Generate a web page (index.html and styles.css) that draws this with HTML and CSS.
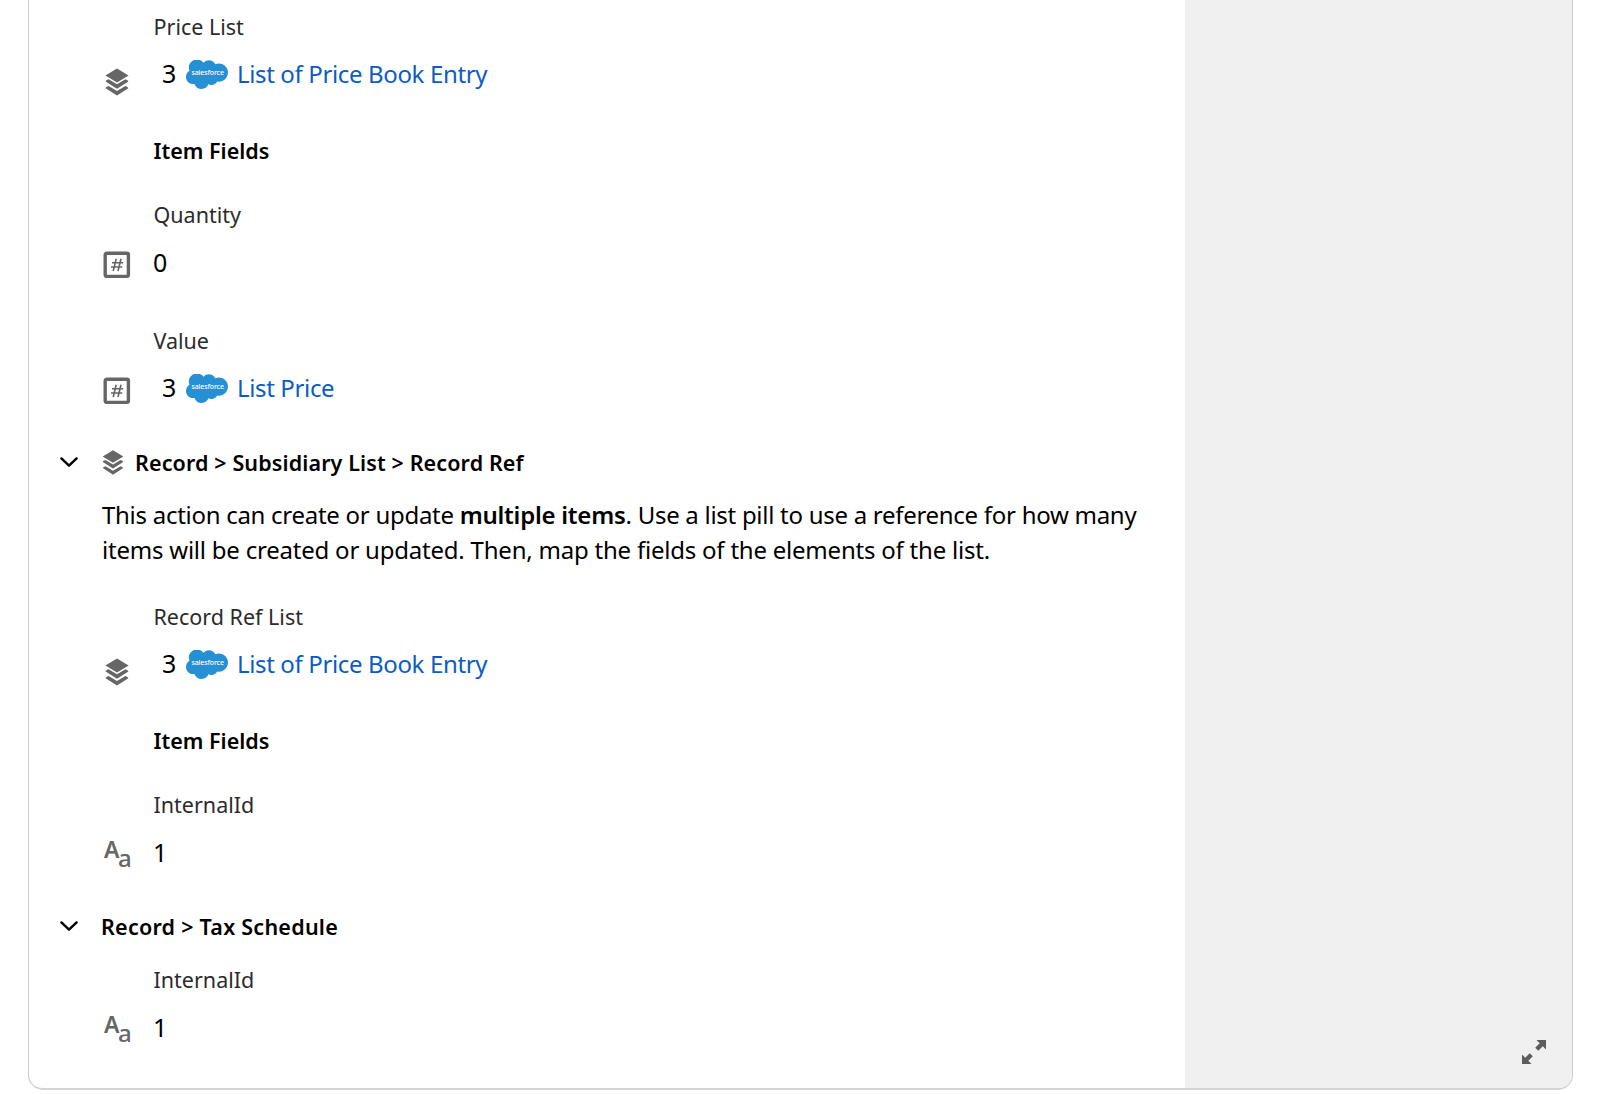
FILE: index.html
```
<!DOCTYPE html>
<html lang="en">
<head>
<meta charset="UTF-8">
<meta name="viewport" content="width=device-width, initial-scale=1.0">
<title>Record mapping</title>
<link rel="stylesheet" href="styles.css">
</head>
<body>
  <svg class="sprite" width="0" height="0">
    <symbol id="icon-list" viewBox="0 0 24 28">
      <path d="M12 0.4 23.6 7.4 12 14.4 0.4 7.4Z"/>
      <path d="M0.6 13.4Q0.3 12.500 3.600 11.300L12 16.300 20.400 11.300Q23.700 12.500 23.400 13.400L12 20.800Z"/>
      <path d="M0.6 20.2Q0.3 19.300 3.600 18.100L12 23.100 20.400 18.100Q23.700 19.300 23.400 20.200L12 27.600Z"/>
    </symbol>
    <symbol id="icon-number" viewBox="0 0 28 28">
      <rect x="2.2" y="2.2" width="23.2" height="23.2" rx="1.6" fill="none" stroke="currentColor" stroke-width="3.4"/>
      <path d="M13.2 7.800 10.200 20M18 7.800 15 20M9 11.800H20.200M8 16H19.200" fill="none" stroke="currentColor" stroke-width="1.6"/>
    </symbol>
    <symbol id="icon-chevron" viewBox="0 0 18 10">
      <path d="M1.4 1.4 9 8.700 16.600 1.400" fill="none" stroke="#000" stroke-width="2.4" stroke-linecap="round" stroke-linejoin="round"/>
    </symbol>
    <symbol id="logo-salesforce" viewBox="0 0 42 29">
      <path fill="#2590d3" transform="scale(1.75 1.75) translate(0 -3.9)" d="M10.006 5.415a4.195 4.195 0 013.045-1.306c1.56 0 2.954.9 3.69 2.205.63-.3 1.35-.45 2.1-.45 2.85 0 5.159 2.34 5.159 5.22s-2.31 5.22-5.176 5.22c-.345 0-.69-.044-1.02-.104a3.75 3.75 0 01-3.3 1.95c-.6 0-1.155-.15-1.65-.375A4.314 4.314 0 018.88 20.4a4.302 4.302 0 01-4.05-2.82c-.27.062-.54.076-.825.076-2.204 0-4.005-1.8-4.005-4.05 0-1.5.811-2.805 2.01-3.51-.255-.57-.39-1.2-.39-1.846 0-2.58 2.1-4.65 4.65-4.65 1.53 0 2.85.705 3.72 1.8"/>
    </symbol>
  </svg>

  <div class="card">
    <main class="mapping">
      <div class="field">
        <div class="label">Price List</div>
        <div class="row">
          <svg class="icon icon-list"><use href="#icon-list"/></svg>
          <span class="pill"><span class="step">3</span><span class="logo"><svg><use href="#logo-salesforce"/></svg><span>salesforce</span></span><a class="link" href="#">List of Price Book Entry</a></span>
        </div>
      </div>
      <h3 class="subhead">Item Fields</h3>
      <div class="field">
        <div class="label">Quantity</div>
        <div class="row">
          <svg class="icon"><use href="#icon-number"/></svg>
          <span class="constant">0</span>
        </div>
      </div>
      <div class="field next">
        <div class="label">Value</div>
        <div class="row">
          <svg class="icon"><use href="#icon-number"/></svg>
          <span class="pill"><span class="step">3</span><span class="logo"><svg><use href="#logo-salesforce"/></svg><span>salesforce</span></span><a class="link" href="#">List Price</a></span>
        </div>
      </div>

      <h2 class="group-title">
        <svg class="chevron"><use href="#icon-chevron"/></svg>
        <svg class="group-icon"><use href="#icon-list"/></svg>
        <span class="path-list">Record &gt; Subsidiary List &gt; Record Ref</span>
      </h2>
      <p class="help"><span class="line-1">This action can create or update <b>multiple items</b>. Use a list pill to use a reference for how many</span><br><span class="line-2">items will be created or updated. Then, map the fields of the elements of the list.</span></p>
      <div class="field ref-list">
        <div class="label">Record Ref List</div>
        <div class="row">
          <svg class="icon icon-list"><use href="#icon-list"/></svg>
          <span class="pill"><span class="step">3</span><span class="logo"><svg><use href="#logo-salesforce"/></svg><span>salesforce</span></span><a class="link" href="#">List of Price Book Entry</a></span>
        </div>
      </div>
      <h3 class="subhead">Item Fields</h3>
      <div class="field">
        <div class="label">InternalId</div>
        <div class="row">
          <span class="icon icon-text"><b>A</b><i>a</i></span>
          <span class="constant">1</span>
        </div>
      </div>

      <h2 class="group-title">
        <svg class="chevron"><use href="#icon-chevron"/></svg>
        <span class="path-tax">Record &gt; Tax Schedule</span>
      </h2>
      <div class="field tax">
        <div class="label">InternalId</div>
        <div class="row">
          <span class="icon icon-text"><b>A</b><i>a</i></span>
          <span class="constant">1</span>
        </div>
      </div>
    </main>
    <aside class="side">
      <svg class="expand" viewBox="0 0 26 26">
        <path d="M15.500 1H25V10.500L21.800 7.300 17.300 11.800 14.200 8.700 18.700 4.200Z"/>
        <path d="M10.500 25H1V15.500L4.200 18.700 8.700 14.200 11.800 17.300 7.300 21.800Z"/>
      </svg>
    </aside>
  </div>
</body>
</html>
```
FILE: styles.css
```
* {
  box-sizing: border-box;
}
body {
  margin: 0;
  height: 1094px;
  padding: 0 27px 4px 28px;
  background: #fff;
  color: #000;
  font-family: "Noto Sans", sans-serif;
  font-size: 24px;
  overflow: hidden;
}
.sprite {
  display: block;
}
.card {
  display: flex;
  height: 1090px;
  border: 1px solid #cbcbcb;
  border-top: 0;
  border-bottom: 2px solid #d4d4d4;
  border-radius: 0 0 15px 15px;
  overflow: hidden;
}
.mapping {
  width: 1156px;
  padding: 12px 0 0 1px;
}
.side {
  flex: 1;
  display: flex;
  justify-content: flex-end;
  align-items: flex-end;
  padding: 0 25px 23px 0;
  background: #f0f0f0;
}
.expand {
  width: 26px;
  height: 26px;
  fill: #5c5c5c;
}

/* fields */
.field {
  padding-left: 73px;
}
.label {
  padding-left: 50.5px;
  height: 30px;
  font-size: 21.5px;
  line-height: 30px;
  color: #2b2b2b;
}
.row {
  display: flex;
  height: 34px;
  margin-top: 15px;
  line-height: 34px;
}
.icon {
  flex: none;
  width: 28px;
  height: 28px;
  margin: 6px 22px 0 0;
  color: #666;
  fill: #666;
}
.icon-list {
  margin-top: 11px;
  padding: 0 1px;
}
.icon-text {
  display: flex;
  padding-left: 1px;
}
.icon-text b {
  width: 14px;
  font-size: 23px;
  font-weight: 600;
  line-height: 17px;
}
.icon-text i {
  font-size: 24px;
  font-style: normal;
  font-weight: 500;
  line-height: 34px;
}
.constant {
  font-size: 25px;
}
.pill {
  display: flex;
  padding-left: 9px;
}
.step {
  width: 24px;
  font-size: 25px;
  line-height: 33px;
}
.logo {
  position: relative;
  width: 42px;
  height: 29px;
  margin-top: 3px;
}
.logo svg {
  display: block;
  width: 42px;
  height: 29px;
}
.logo span {
  position: absolute;
  top: 7px;
  left: 5.5px;
  color: #fff;
  font-size: 7px;
  font-weight: 500;
  line-height: 12px;
  letter-spacing: -0.15px;
}
.link {
  margin-left: 9px;
  color: #0b5cc4;
  line-height: 33px;
  letter-spacing: -0.36px;
  text-decoration: none;
}

/* headings */
.subhead {
  height: 30px;
  margin: 45px 0 34px;
  padding-left: 123.5px;
  font-size: 21.5px;
  font-weight: 600;
  line-height: 30px;
}
.next {
  margin-top: 47px;
}
.group-title {
  display: flex;
  height: 30px;
  margin: 43px 0 0;
  padding-left: 30px;
  font-size: 21.5px;
  font-weight: 600;
  line-height: 30px;
}
.path-list {
  letter-spacing: 0.12px;
}
.path-tax {
  letter-spacing: 0.25px;
}
.chevron {
  width: 18px;
  height: 10px;
  margin: 9px 23px 0 0;
}
.group-icon {
  width: 22px;
  height: 25px;
  margin: 2px 11px 0 1px;
  fill: #666;
}
.help {
  margin: 20px 0 0;
  padding-left: 72px;
  line-height: 34.5px;
  white-space: nowrap;
}
.help b {
  font-weight: 600;
  letter-spacing: -0.24px;
}
.line-1 {
  letter-spacing: -0.28px;
}
.line-2 {
  letter-spacing: -0.22px;
}
.ref-list {
  margin-top: 35px;
}
.tax {
  margin-top: 23px;
}
```
